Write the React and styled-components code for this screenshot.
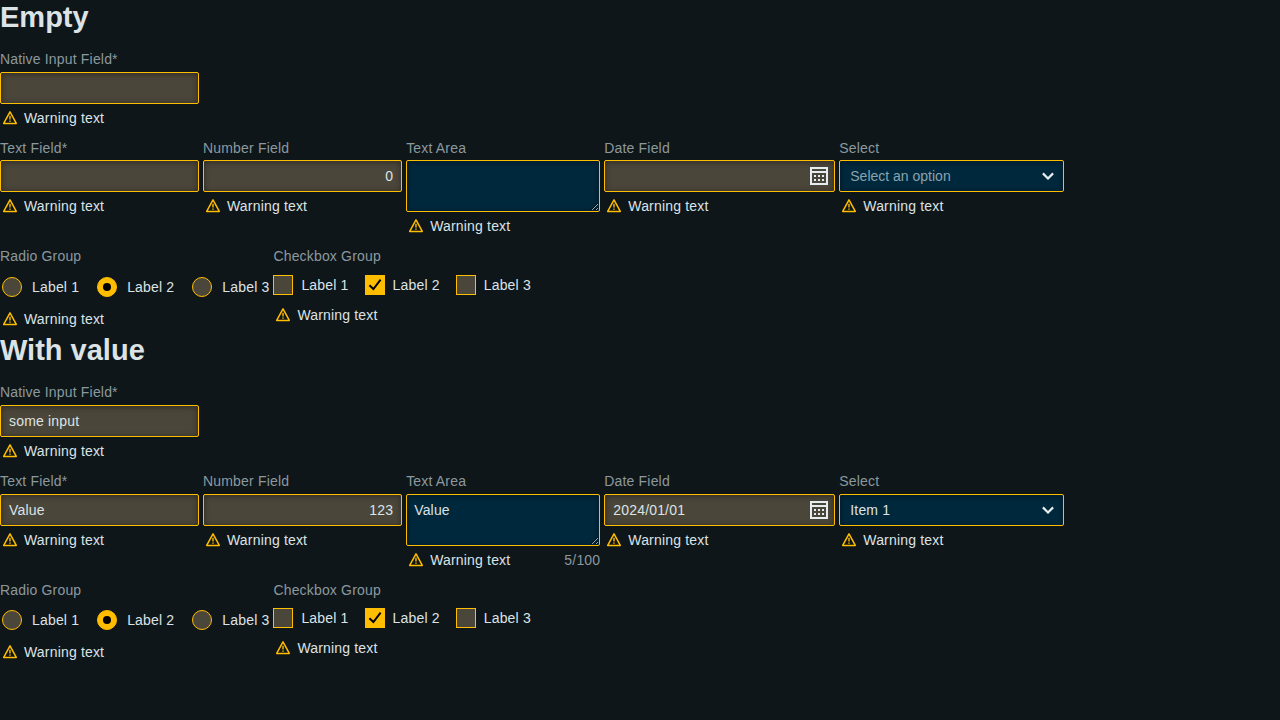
import React from "react";
import styled, { createGlobalStyle } from "styled-components";

const GlobalStyle = createGlobalStyle`
  *, *::before, *::after { box-sizing: border-box; }
  html, body { margin: 0; background: #0f1619; }
  body {
    color: #dce3e6;
    font-family: "Liberation Sans", Arial, sans-serif;
    font-size: 14px;
    line-height: 20px;
    letter-spacing: 0.175px;
  }
`;

const Section = styled.section`
  height: 333.4px;
`;

const Heading = styled.h1`
  margin: 0;
  height: 49px;
  font-size: 29px;
  line-height: 34px;
  letter-spacing: 0;
  font-weight: 700;
`;

const Row = styled.div`
  display: flex;
  align-items: flex-start;
  gap: 4px;
  height: ${(p) => p.$height}px;
`;

const Field = styled.div`
  width: ${(p) => (p.$width ? `${p.$width}px` : "auto")};
`;

const Label = styled.div`
  color: #8b999f;
  white-space: nowrap;
  margin-bottom: ${(p) => p.$gap ?? 2.2}px;
`;

const controlStyles = `
  display: block;
  width: 100%;
  margin: 0;
  border: 1px solid #ffbd00;
  border-radius: 2px;
  outline: none;
  color: #dce3e6;
  font: inherit;
  letter-spacing: inherit;
  box-shadow: inset 0 1px 6px rgba(0, 0, 0, 0.4);
`;

const Input = styled.input`
  ${controlStyles}
  height: 32px;
  padding: 0 8px;
  background: #4b463a;
  text-align: ${(p) => p.$align || "left"};
`;

const TextArea = styled.textarea`
  ${controlStyles}
  height: 52px;
  padding: 5px 7px;
  background: #00283c;
  resize: both;
`;

const DateBox = styled.div`
  ${controlStyles}
  display: flex;
  align-items: center;
  justify-content: space-between;
  height: 32px;
  padding: 0 6px 0 8px;
  background: #4b463a;
`;

const SelectBox = styled.div`
  ${controlStyles}
  display: flex;
  align-items: center;
  justify-content: space-between;
  height: 32px;
  padding: 0 7px 0 10px;
  background: #00283c;
  letter-spacing: ${(p) => (p.$placeholder ? "0" : "inherit")};
  color: ${(p) => (p.$placeholder ? "#8ba2ae" : "#dce3e6")};
`;

const Helper = styled.div`
  display: flex;
  align-items: center;
  gap: 4px;
  height: 20px;
  margin-top: ${(p) => p.$gap ?? 4}px;
  white-space: nowrap;
`;

const Counter = styled.span`
  margin-left: auto;
  color: #8b999f;
`;

const Options = styled.div`
  display: flex;
  gap: ${(p) => p.$gap}px;
  padding-left: ${(p) => p.$inset ?? 0}px;
`;

const Option = styled.div`
  display: flex;
  align-items: center;
  gap: ${(p) => p.$gap}px;
  height: 20px;
  white-space: nowrap;
`;

const Radio = styled.span`
  display: grid;
  place-items: center;
  width: 20px;
  height: 20px;
  border: 1px solid #ffbd00;
  border-radius: 50%;
  background: ${(p) => (p.$checked ? "#ffbd00" : "#4b463a")};

  &::after {
    content: "";
    width: 8px;
    height: 8px;
    border-radius: 50%;
    background: ${(p) => (p.$checked ? "#000" : "transparent")};
  }
`;

const Checkbox = styled.span`
  display: grid;
  place-items: center;
  width: 20px;
  height: 20px;
  border: 1px solid #ffbd00;
  background: ${(p) => (p.$checked ? "#ffbd00" : "#4b463a")};
`;

const WarningIcon = () => (
  <svg width="20" height="20" viewBox="0 0 20 20" fill="none" stroke="#ffbd00">
    <path d="M10 3.9 L16.3 15.4 H3.7 Z" strokeWidth="1.5" strokeLinejoin="round" />
    <path d="M10 7.7V11.5M10 12.4V13.8" strokeWidth="1.4" />
  </svg>
);

const CalendarIcon = () => (
  <svg width="18" height="18" viewBox="0 0 18 18" fill="#e6edf0" shapeRendering="crispEdges">
    <path
      fillRule="evenodd"
      d="M0 0H18V18H0ZM2 2V4H16V2ZM2 6V16H16V6Z"
    />
    <path d="M4 8h2v2H4zM8 8h2v2H8zM12 8h2v2h-2zM4 12h2v2H4zM8 12h2v2H8zM12 12h2v2h-2z" />
  </svg>
);

const ChevronIcon = () => (
  <svg width="16" height="16" viewBox="0 0 16 16" fill="none" stroke="#e6edf0" strokeWidth="2.2">
    <path d="M2.9 5.4L8 10.5L13.1 5.4" />
  </svg>
);

const CheckIcon = () => (
  <svg width="18" height="18" viewBox="0 0 18 18" fill="none" stroke="#000" strokeWidth="2">
    <path d="M3.4 9.2L7.4 13L14.6 3.7" />
  </svg>
);

const Warning = ({ gap, counter }) => (
  <Helper $gap={gap}>
    <WarningIcon />
    <span>Warning text</span>
    {counter && <Counter>{counter}</Counter>}
  </Helper>
);

const options = ["Label 1", "Label 2", "Label 3"];

const FormSection = ({ title, native, text, number, area, counter, date, select, placeholder }) => (
  <Section>
    <Heading>{title}</Heading>
    <Row $height={89}>
      <Field $width={199}>
        <Label $gap={3}>Native Input Field*</Label>
        <Input defaultValue={native} />
        <Warning />
      </Field>
    </Row>
    <Row $height={108.2}>
      <Field $width={199}>
        <Label>Text Field*</Label>
        <Input defaultValue={text} />
        <Warning />
      </Field>
      <Field $width={199.2}>
        <Label>Number Field</Label>
        <Input defaultValue={number} $align="right" />
        <Warning />
      </Field>
      <Field $width={194.1}>
        <Label>Text Area</Label>
        <TextArea defaultValue={area} />
        <Warning counter={counter} />
      </Field>
      <Field $width={231}>
        <Label>Date Field</Label>
        <DateBox>
          <span>{date}</span>
          <CalendarIcon />
        </DateBox>
        <Warning />
      </Field>
      <Field $width={225}>
        <Label>Select</Label>
        <SelectBox $placeholder={placeholder}>
          <span>{select}</span>
          <ChevronIcon />
        </SelectBox>
        <Warning />
      </Field>
    </Row>
    <Row $height={87}>
      <Field $width={269.4}>
        <Label $gap={10.8}>Radio Group</Label>
        <Options $gap={18} $inset={2}>
          {options.map((name, i) => (
            <Option key={name} $gap={10}>
              <Radio $checked={i === 1} />
              {name}
            </Option>
          ))}
        </Options>
        <Warning gap={12} />
      </Field>
      <Field>
        <Label $gap={8.8}>Checkbox Group</Label>
        <Options $gap={16}>
          {options.map((name, i) => (
            <Option key={name} $gap={8}>
              <Checkbox $checked={i === 1}>{i === 1 && <CheckIcon />}</Checkbox>
              {name}
            </Option>
          ))}
        </Options>
        <Warning gap={10} />
      </Field>
    </Row>
  </Section>
);

export default function App() {
  return (
    <>
      <GlobalStyle />
      <main>
        <FormSection
          title="Empty"
          native=""
          text=""
          number="0"
          area=""
          date=""
          select="Select an option"
          placeholder
        />
        <FormSection
          title="With value"
          native="some input"
          text="Value"
          number="123"
          area="Value"
          counter="5/100"
          date="2024/01/01"
          select="Item 1"
        />
      </main>
    </>
  );
}
